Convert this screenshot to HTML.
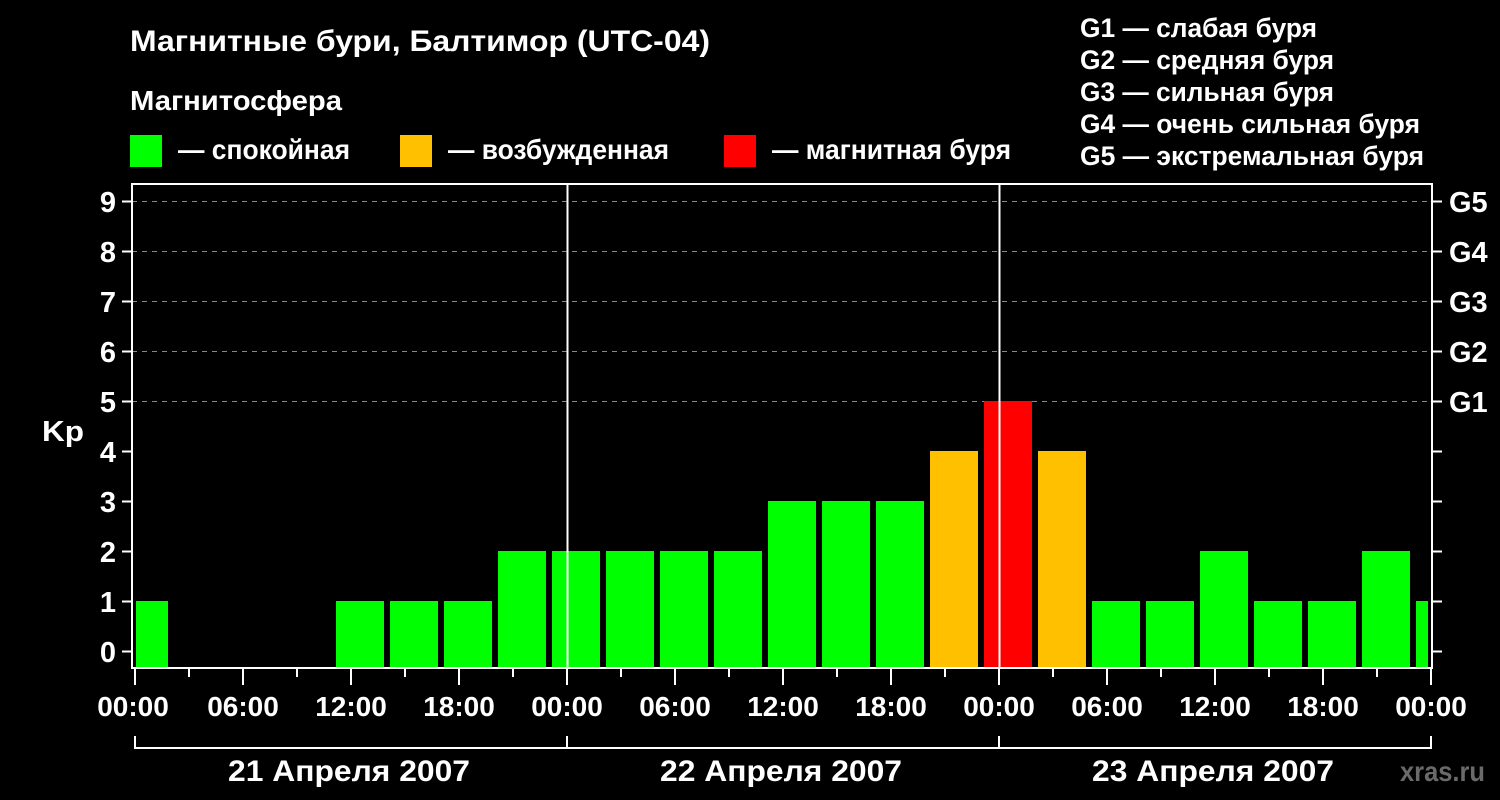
<!DOCTYPE html>
<html><head><meta charset="utf-8"><style>html,body{margin:0;padding:0;background:#000;width:1500px;height:800px;overflow:hidden}</style></head><body>
<svg width="1500" height="800" xmlns="http://www.w3.org/2000/svg" font-family="Liberation Sans, sans-serif" font-weight="bold" fill="#fff">
<rect width="1500" height="800" fill="#000"/>
<text x="130" y="51" font-size="30" textLength="580" lengthAdjust="spacingAndGlyphs">Магнитные бури, Балтимор (UTC-04)</text>
<text x="130" y="110" font-size="28" textLength="212" lengthAdjust="spacingAndGlyphs">Магнитосфера</text>
<rect x="130" y="135" width="32" height="32" fill="#00ff00"/>
<text x="178" y="159" font-size="28" textLength="172" lengthAdjust="spacingAndGlyphs">— спокойная</text>
<rect x="400" y="135" width="32" height="32" fill="#ffc000"/>
<text x="448" y="159" font-size="28" textLength="221" lengthAdjust="spacingAndGlyphs">— возбужденная</text>
<rect x="724" y="135" width="32" height="32" fill="#ff0000"/>
<text x="772" y="159" font-size="28" textLength="239" lengthAdjust="spacingAndGlyphs">— магнитная буря</text>
<g font-size="27">
<text x="1080" y="37" textLength="237" lengthAdjust="spacingAndGlyphs">G1 — слабая буря</text>
<text x="1080" y="69" textLength="254" lengthAdjust="spacingAndGlyphs">G2 — средняя буря</text>
<text x="1080" y="101" textLength="254" lengthAdjust="spacingAndGlyphs">G3 — сильная буря</text>
<text x="1080" y="133" textLength="340" lengthAdjust="spacingAndGlyphs">G4 — очень сильная буря</text>
<text x="1080" y="165" textLength="344" lengthAdjust="spacingAndGlyphs">G5 — экстремальная буря</text>
</g>
<g stroke="#888" stroke-width="1" stroke-dasharray="5,5">
<line x1="132" y1="201.5" x2="1432" y2="201.5"/><line x1="132" y1="251.5" x2="1432" y2="251.5"/><line x1="132" y1="301.5" x2="1432" y2="301.5"/><line x1="132" y1="351.5" x2="1432" y2="351.5"/><line x1="132" y1="401.5" x2="1432" y2="401.5"/>
</g>
<g>
<rect x="136" y="601" width="32" height="67" fill="#00ff00"/>
<rect x="336" y="601" width="48" height="67" fill="#00ff00"/>
<rect x="390" y="601" width="48" height="67" fill="#00ff00"/>
<rect x="444" y="601" width="48" height="67" fill="#00ff00"/>
<rect x="498" y="551" width="48" height="117" fill="#00ff00"/>
<rect x="552" y="551" width="48" height="117" fill="#00ff00"/>
<rect x="606" y="551" width="48" height="117" fill="#00ff00"/>
<rect x="660" y="551" width="48" height="117" fill="#00ff00"/>
<rect x="714" y="551" width="48" height="117" fill="#00ff00"/>
<rect x="768" y="501" width="48" height="167" fill="#00ff00"/>
<rect x="822" y="501" width="48" height="167" fill="#00ff00"/>
<rect x="876" y="501" width="48" height="167" fill="#00ff00"/>
<rect x="930" y="451" width="48" height="217" fill="#ffc000"/>
<rect x="984" y="401" width="48" height="267" fill="#ff0000"/>
<rect x="1038" y="451" width="48" height="217" fill="#ffc000"/>
<rect x="1092" y="601" width="48" height="67" fill="#00ff00"/>
<rect x="1146" y="601" width="48" height="67" fill="#00ff00"/>
<rect x="1200" y="551" width="48" height="117" fill="#00ff00"/>
<rect x="1254" y="601" width="48" height="67" fill="#00ff00"/>
<rect x="1308" y="601" width="48" height="67" fill="#00ff00"/>
<rect x="1362" y="551" width="48" height="117" fill="#00ff00"/>
<rect x="1416" y="601" width="12" height="67" fill="#00ff00"/>
</g>
<g stroke="#fff" fill="none">
<line x1="567.5" y1="183" x2="567.5" y2="668" stroke-width="2"/>
<line x1="999.5" y1="183" x2="999.5" y2="668" stroke-width="2"/>
<rect x="132" y="184" width="1300" height="484" stroke-width="2"/>
<path d="M122 201.5h9M122 251.5h9M122 301.5h9M122 351.5h9M122 401.5h9M122 451.5h9M122 501.5h9M122 551.5h9M122 601.5h9M122 651.5h9" stroke-width="2"/>
<path d="M1433 201.5h9M1433 251.5h9M1433 301.5h9M1433 351.5h9M1433 401.5h9M1433 451.5h9M1433 501.5h9M1433 551.5h9M1433 601.5h9M1433 651.5h9" stroke-width="2"/>
<path d="M135 669v16M189 669v8M243 669v16M297 669v8M351 669v16M405 669v8M459 669v16M513 669v8M567 669v16M621 669v8M675 669v16M729 669v8M783 669v16M837 669v8M891 669v16M945 669v8M999 669v16M1053 669v8M1107 669v16M1161 669v8M1215 669v16M1269 669v8M1323 669v16M1377 669v8M1431 669v16" stroke-width="2"/>
<path d="M135 736v13M567 736v13M999 736v13M1431 736v13M135 748h1296" stroke-width="2"/>
</g>
<g font-size="29" text-anchor="end">
<text x="116" y="212">9</text><text x="116" y="262">8</text><text x="116" y="312">7</text><text x="116" y="362">6</text><text x="116" y="412">5</text><text x="116" y="462">4</text><text x="116" y="512">3</text><text x="116" y="562">2</text><text x="116" y="612">1</text><text x="116" y="662">0</text>
</g>
<text x="42" y="441" font-size="29" textLength="42" lengthAdjust="spacingAndGlyphs">Kp</text>
<g font-size="29">
<text x="1449" y="212">G5</text><text x="1449" y="262">G4</text><text x="1449" y="312">G3</text><text x="1449" y="362">G2</text><text x="1449" y="412">G1</text>
</g>
<g font-size="28" text-anchor="middle">
<text x="133" y="716">00:00</text><text x="243" y="716">06:00</text><text x="351" y="716">12:00</text><text x="459" y="716">18:00</text><text x="567" y="716">00:00</text><text x="675" y="716">06:00</text><text x="783" y="716">12:00</text><text x="891" y="716">18:00</text><text x="999" y="716">00:00</text><text x="1107" y="716">06:00</text><text x="1215" y="716">12:00</text><text x="1323" y="716">18:00</text><text x="1431" y="716">00:00</text>
</g>
<g font-size="30">
<text x="228" y="781" textLength="242" lengthAdjust="spacingAndGlyphs">21 Апреля 2007</text>
<text x="660" y="781" textLength="242" lengthAdjust="spacingAndGlyphs">22 Апреля 2007</text>
<text x="1092" y="781" textLength="242" lengthAdjust="spacingAndGlyphs">23 Апреля 2007</text>
</g>
<text x="1400" y="781" font-size="28" fill="#6a6a6a" textLength="85" lengthAdjust="spacingAndGlyphs">xras.ru</text>
</svg>
</body></html>
